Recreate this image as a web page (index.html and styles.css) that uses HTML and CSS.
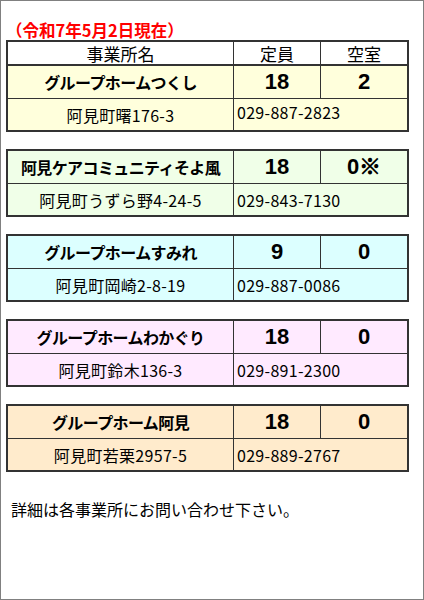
FILE: index.html
```html
<!DOCTYPE html>
<html lang="ja">
<head>
<meta charset="utf-8">
<link rel="stylesheet" href="styles.css">
</head>
<body>
<div class="page">
  <div class="date">（令和7年5月2日現在）</div>

  <div class="card c-yellow">
    <div class="hd">事業所名</div>
    <div class="hd">定員</div>
    <div class="hd last">空室</div>
    <div class="name">グループホームつくし</div>
    <div class="num">18</div>
    <div class="num last">2</div>
    <div class="addr">阿見町曙176-3</div>
    <div class="tel tel-top">029-887-2823</div>
  </div>

  <div class="card c-green">
    <div class="name">阿見ケアコミュニティそよ風</div>
    <div class="num">18</div>
    <div class="num last">0※</div>
    <div class="addr">阿見町うずら野4-24-5</div>
    <div class="tel">029-843-7130</div>
  </div>

  <div class="card c-cyan">
    <div class="name">グループホームすみれ</div>
    <div class="num">9</div>
    <div class="num last">0</div>
    <div class="addr">阿見町岡崎2-8-19</div>
    <div class="tel">029-887-0086</div>
  </div>

  <div class="card c-pink">
    <div class="name">グループホームわかぐり</div>
    <div class="num">18</div>
    <div class="num last">0</div>
    <div class="addr">阿見町鈴木136-3</div>
    <div class="tel">029-891-2300</div>
  </div>

  <div class="card c-peach">
    <div class="name">グループホーム阿見</div>
    <div class="num">18</div>
    <div class="num last">0</div>
    <div class="addr">阿見町若栗2957-5</div>
    <div class="tel">029-889-2767</div>
  </div>

  <p class="note">詳細は各事業所にお問い合わせ下さい。</p>
</div>
</body>
</html>
```
FILE: styles.css
```css
html, body {
  margin: 0;
  padding: 0;
  background: #fff;
}
.page {
  box-sizing: border-box;
  width: 424px;
  height: 600px;
  border: 1px solid #808080;
  padding: 19px 0 0 5px;
  font-family: "Noto Sans CJK JP", sans-serif;
  color: #000;
}
.date {
  color: #ff0000;
  font-weight: bold;
  font-size: 16.5px;
  line-height: 20px;
  margin: 0;
}
.card {
  display: grid;
  grid-template-columns: 226px 87px 86px;
  width: 399px;
  border: 2px solid #333;
  margin-bottom: 17px;
}
.card > div {
  box-sizing: border-box;
  border-right: 1px solid #333;
  border-bottom: 1px solid #333;
  display: flex;
  align-items: center;
  justify-content: center;
}
.card > div.last { border-right: none; }
.hd {
  background: #fff;
  height: 24px;
  font-size: 17px;
  border-bottom-width: 2px !important;
  padding-top: 1px;
}
.name {
  height: 33px;
  font-size: 16px;
  font-weight: bold;
  letter-spacing: -0.6px;
}
.num {
  height: 33px;
  font-family: "Liberation Sans", Arial, sans-serif;
  font-size: 22px;
  font-weight: bold;
}
.addr {
  height: 31px;
  font-size: 16px;
  border-bottom: none !important;
  letter-spacing: 0.3px;
}
.tel {
  grid-column: 2 / 4;
  height: 31px;
  font-size: 16px;
  justify-content: flex-start !important;
  padding-left: 3px;
  border-right: none !important;
  border-bottom: none !important;
  letter-spacing: 0.3px;
}
.tel-top {
  align-items: flex-start !important;
  padding-top: 1px;
}
.c-yellow .name, .c-yellow .num, .c-yellow .addr, .c-yellow .tel { background: #ffffdc; }
.c-green > div { background: #f0ffe8; }
.c-cyan > div { background: #dcffff; }
.c-pink > div { background: #ffeaff; }
.c-peach > div { background: #ffebcc; }
.note {
  margin: 27px 0 0 5px;
  font-size: 16px;
  line-height: 20px;
}
```
